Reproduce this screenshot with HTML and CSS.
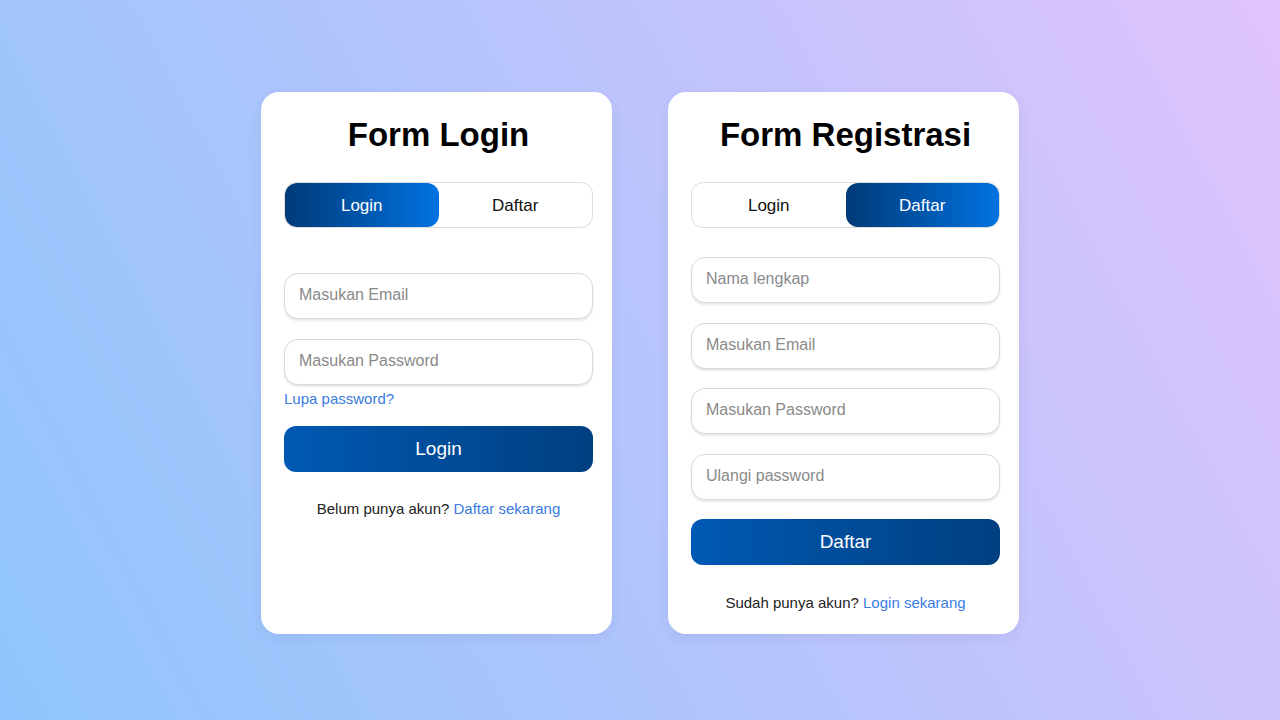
FILE: index.html
```html
<!DOCTYPE html>
<html lang="id">
<head>
<meta charset="utf-8">
<title>Form Login & Registrasi</title>
<link rel="stylesheet" href="styles.css">
</head>
<body>
<main class="wrap">
  <section class="card">
    <h2 class="title">Form Login</h2>
    <div class="toggle">
      <button class="tab active">Login</button>
      <button class="tab">Daftar</button>
    </div>
    <form class="form form-login">
      <input class="field" type="email" placeholder="Masukan Email">
      <div class="pw-group">
        <input class="field" type="password" placeholder="Masukan Password">
        <a class="link forgot" href="#">Lupa password?</a>
      </div>
      <button class="submit" type="button">Login</button>
      <p class="foot">Belum punya akun? <a class="link" href="#">Daftar sekarang</a></p>
    </form>
  </section>
  <section class="card">
    <h2 class="title">Form Registrasi</h2>
    <div class="toggle">
      <button class="tab">Login</button>
      <button class="tab active">Daftar</button>
    </div>
    <form class="form form-reg">
      <input class="field" type="text" placeholder="Nama lengkap">
      <input class="field" type="email" placeholder="Masukan Email">
      <input class="field" type="password" placeholder="Masukan Password">
      <input class="field" type="password" placeholder="Ulangi password">
      <button class="submit" type="button">Daftar</button>
      <p class="foot foot-reg">Sudah punya akun? <a class="link" href="#">Login sekarang</a></p>
    </form>
  </section>
</main>
</body>
</html>
```
FILE: styles.css
```css
* { box-sizing: border-box; }
html, body { margin: 0; height: 100%; }
body {
  font-family: Arial, "Liberation Sans", sans-serif;
  background: linear-gradient(62deg, #8ec5fc 0%, #e0c3fc 100%);
  color: #222;
}
.wrap {
  display: flex;
  justify-content: center;
  align-items: flex-start;
  gap: 56px;
  padding-top: 92px;
  height: 100%;
}
.card {
  width: 351px;
  height: 542px;
  background: #fff;
  border-radius: 18px;
  padding: 24px 19px 0 23px;
  box-shadow: 0 4px 12px rgba(60, 60, 120, 0.08);
}
.title {
  margin: 0;
  font-size: 33px;
  line-height: 37px;
  font-weight: bold;
  color: #000;
  text-align: center;
}
.toggle {
  margin-top: 29px;
  height: 46px;
  border: 1px solid #dedede;
  border-radius: 12px;
  display: flex;
  overflow: hidden;
}
.tab {
  flex: 1;
  border: 0;
  background: transparent;
  font-family: inherit;
  font-size: 17px;
  color: #111;
  border-radius: 12px;
  padding: 1px 0 0;
}
.tab.active {
  color: #fff;
  background: linear-gradient(90deg, #003a78 0%, #0072e0 100%);
}
.form {
  display: flex;
  flex-direction: column;
}
.form-login { margin-top: 45px; gap: 20px; }
.form-reg { margin-top: 29px; gap: 19.5px; }
.field {
  height: 46px;
  width: 100%;
  border: 1px solid #d9d9d9;
  border-radius: 14px;
  padding: 0 14px 2px;
  font-family: inherit;
  font-size: 16px;
  color: #222;
  box-shadow: 0 2px 2px rgba(0, 0, 0, 0.09);
  outline: none;
}
.field::placeholder { color: #8a8a8a; }
.pw-group {
  display: flex;
  flex-direction: column;
}
.forgot {
  margin-top: 5px;
  line-height: 18px;
  font-size: 15px;
  align-self: flex-start;
}
.form-login .submit { margin-top: -2px; }
.link {
  color: #3a7be0;
  text-decoration: none;
}
.submit {
  height: 46px;
  border: 0;
  border-radius: 12px;
  background: linear-gradient(90deg, #0059b3 0%, #003f80 100%);
  color: #fff;
  font-family: inherit;
  font-size: 19px;
}
.foot {
  margin: 8px 0 0;
  text-align: center;
  font-size: 15px;
  line-height: 18px;
  color: #222;
}
.foot-reg { margin-top: 9px; }
```
